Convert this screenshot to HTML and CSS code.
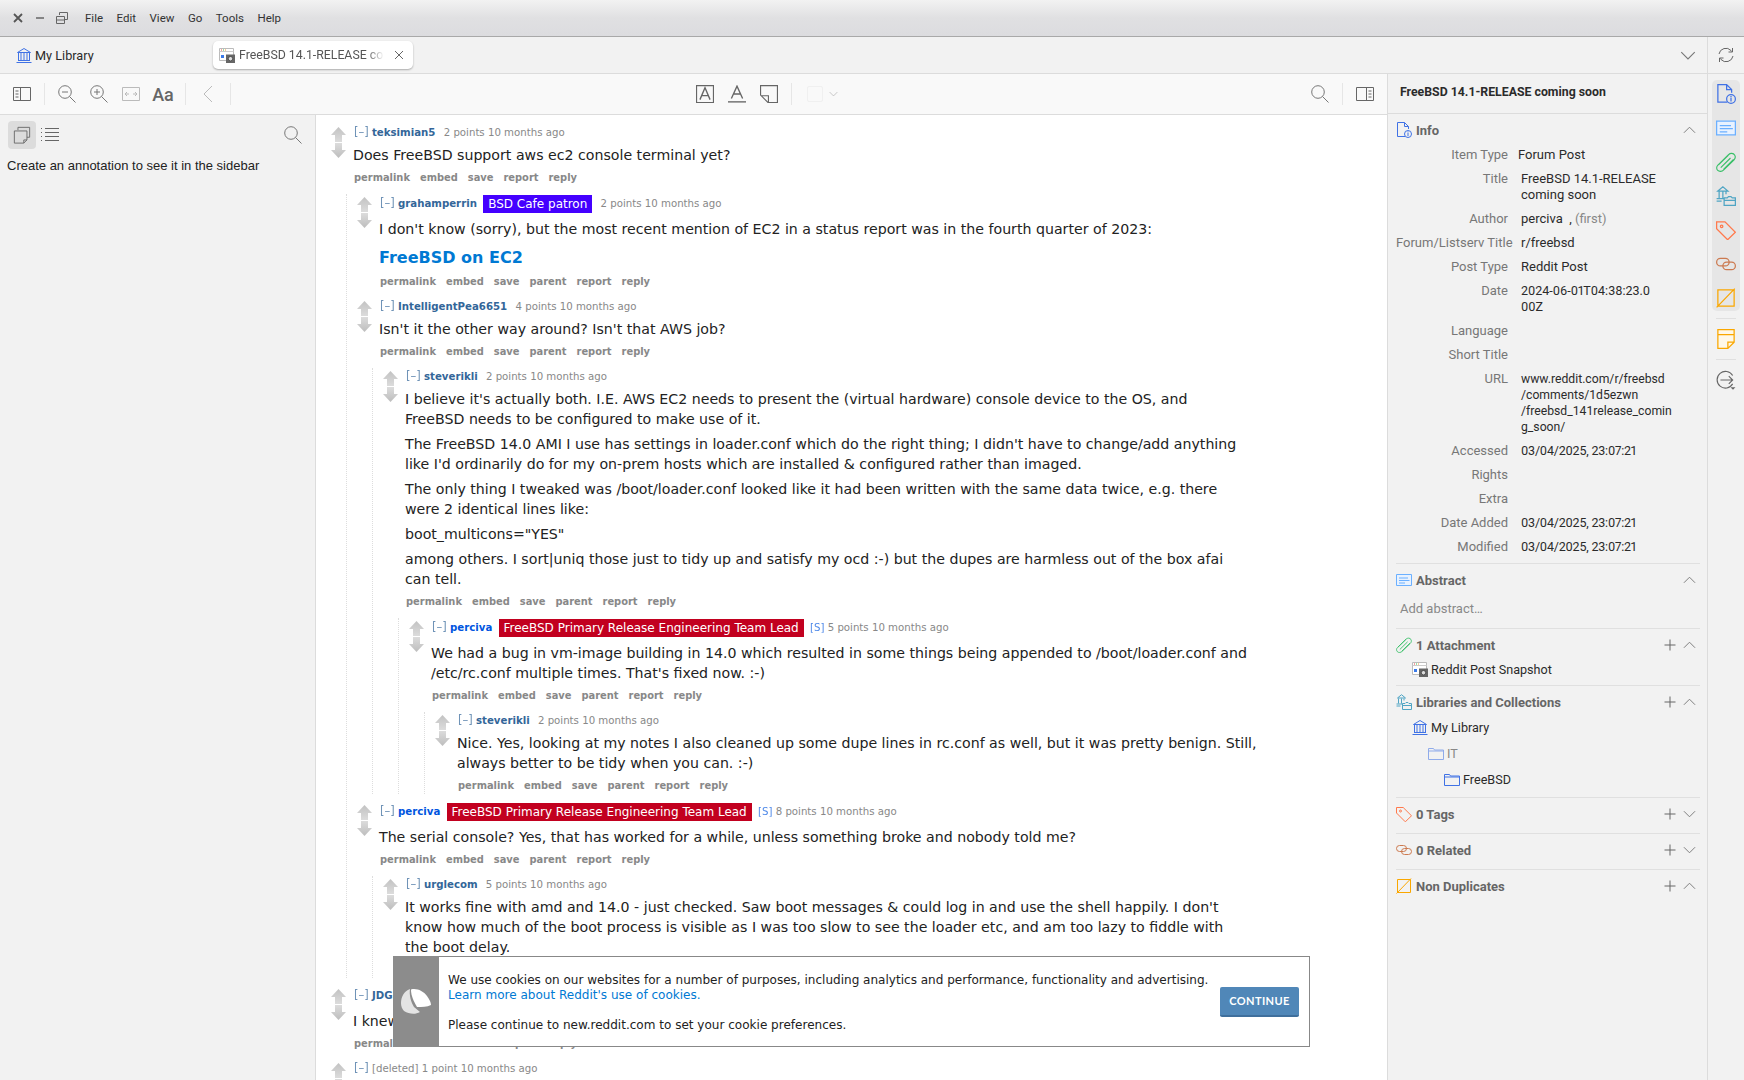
FILE: index.html
```html
<!DOCTYPE html>
<html lang="en">
<head>
<meta charset="utf-8">
<title>FreeBSD 14.1-RELEASE coming soon</title>
<link rel="stylesheet" href="styles.css">
</head>
<body>
<svg class="defs" aria-hidden="true">
  <defs>
    <linearGradient id="up" x1="0" y1="0" x2="0" y2="1"><stop offset="0" stop-color="#c2c2c2"/><stop offset="1" stop-color="#dcdcdc"/></linearGradient>
    <linearGradient id="down" x1="0" y1="0" x2="0" y2="1"><stop offset="0" stop-color="#dcdcdc"/><stop offset="1" stop-color="#bdbdbd"/></linearGradient>
  </defs>
  <symbol id="i-up" viewBox="0 0 15 15"><path d="M7.5 0 15 8H11V15H4V8H0Z" fill="url(#up)"/></symbol>
  <symbol id="i-down" viewBox="0 0 15 15"><path d="M4 0H11V7H15L7.5 15 0 7H4Z" fill="url(#down)"/></symbol>
  <symbol id="i-snap" viewBox="0 0 16 16"><path d="M.5 1.5h14v12H.5z" fill="#fff" stroke="#bbb"/><path d="M.5 4.5h14" stroke="#ccc"/><path d="M2 3h1" stroke="#e44"/><path d="M4 3h1" stroke="#4b4"/><path d="M6 3h1" stroke="#e93"/><path d="M2 8h3v3H2z" fill="#3b7bea"/><path d="M7 7.500h9v8.500H7z" fill="#666"/><circle cx="11.500" cy="11.700" r="2.200" fill="#ddd" stroke="#333" stroke-width=".7"/></symbol>
  <symbol id="i-lib" viewBox="0 0 16 16"><path d="M1.500 5.500 8 1.500l6.500 4z M2.500 6v7 M5 6v7 M8 6v7 M11 6v7 M13.500 6v7 M2 13.500h12 M.5 15.500h15" fill="none" stroke="#4072e5"/></symbol>
  <symbol id="i-info" viewBox="0 0 16 16"><path d="M9 14.500H1.500V.5H8.500l4 4V7 M8.500.5v4h4" fill="none" stroke="#4072e5"/><circle cx="12" cy="12" r="3.500" fill="none" stroke="#4072e5"/><path d="M12 11v3 M12 9.500v1" stroke="#4072e5"/></symbol>
  <symbol id="i-abs" viewBox="0 0 16 16"><path d="M.5 2.500h15v11H.5z" fill="#e8f2ff" stroke="#6bb0ff"/><path d="M3 6h9 M3 8.500h10.500 M3 11h6" stroke="#6bb0ff"/></symbol>
  <symbol id="i-clip" viewBox="0 0 16 16"><path d="M1.500 10.500 10 2.200c1.600-1.600 4-1.300 4.900.2.800 1.300.5 2.900-.6 4L6.200 14.300c-1.500 1.500-3.700 1.500-4.800.4-1.200-1.200-1.100-3 .1-4.200M3.800 12.500 11.600 4.800M6 14l8-8M2 10.200 9.800 2.600" fill="none" stroke="#39bf68" stroke-width=".9"/></symbol>
  <symbol id="i-libcol" viewBox="0 0 16 16"><path d="M1.500 4 5.500.7 9.500 4z M2.500 4.500v5 M5.500 4.500v5 M8 4.500v2 M.5 10h6 M.5 12h4" fill="none" stroke="#50a5c4"/><path d="M6.500 15.500V9.500h2.500l1-1h2l1 1h2.500v6zM6.500 11.500h9" fill="none" stroke="#50a5c4"/></symbol>
  <symbol id="i-tag" viewBox="0 0 16 16"><path d="M.5 1.500h6.700l8.300 8.300-6.200 6-8.800-8.800z" fill="none" stroke="#ff794c"/><circle cx="4.500" cy="5" r="1" fill="none" stroke="#ff794c"/></symbol>
  <symbol id="i-rel" viewBox="0 0 16 16"><rect x=".5" y="3.500" width="10" height="6" rx="3" fill="none" stroke="#cc7a50"/><rect x="5.500" y="6.500" width="10" height="6" rx="3" fill="none" stroke="#cc7a50"/></symbol>
  <symbol id="i-dup" viewBox="0 0 16 16"><path d="M1.500 1.500h13v13h-13z M.5 15.500 15 .5" fill="none" stroke="#faa700"/></symbol>
  <symbol id="i-note" viewBox="0 0 16 16"><path d="M1.500.5h13v10l-5 5h-8z M1.500 4.500h13 M9.500 15.500v-5h5" fill="#fff8e8" stroke="#faa700"/></symbol>
  <symbol id="i-loc" viewBox="0 0 18 18"><path d="M15 12.500A7.500 7.500 0 1 1 15 5 M4 9h11 M11.500 5.500 15 9l-3.500 3.500" fill="none" stroke="#666"/><path d="M13 15.500h4.500l-2.200 2.200z" fill="#666"/></symbol>
  <symbol id="i-folder" viewBox="0 0 16 16"><path d="M.5 14.500V3.500h5l1 1.500h9v9.500zM.5 6h15" fill="none" stroke="currentColor"/></symbol>
  <symbol id="i-ann" viewBox="0 0 20 20"><path d="M5.500 4.500V1.500h13v11h-3 M1.500 5.500h14v10l-3.500 3.500H1.500z M12 19v-3.500h3.500" fill="none" stroke="#666"/></symbol>
  <symbol id="i-search" viewBox="0 0 18 18"><circle cx="7" cy="7" r="6.300" fill="none" stroke="#777"/><path d="m11.500 11.500 6 6" stroke="#777"/></symbol>
  <symbol id="i-up-ch" viewBox="0 0 14 8"><path d="M1 7 7 1l6 6" fill="none" stroke="#777"/></symbol>
  <symbol id="i-dn-ch" viewBox="0 0 14 8"><path d="M1 1l6 6 6-6" fill="none" stroke="#777"/></symbol>
  <symbol id="i-plus" viewBox="0 0 12 12"><path d="M6 .5v11 M.5 6h11" stroke="#666"/></symbol>
</svg>

<header class="titlebar">
  <div class="winctl">
    <svg class="ic12" viewBox="0 0 12 12"><path d="M2 2l8 8M10 2l-8 8" stroke="#555" stroke-width="1.800"/></svg>
    <svg class="ic12" viewBox="0 0 12 12"><path d="M2 6h8" stroke="#666" stroke-width="1.500"/></svg>
    <svg class="ic12" viewBox="0 0 12 12"><path d="M3.500 3V.5h8v7h-3M.5 4.500h8v7h-8z M.5 8h8" fill="none" stroke="#666"/></svg>
  </div>
  <nav class="menu"><span>File</span><span>Edit</span><span>View</span><span>Go</span><span>Tools</span><span>Help</span></nav>
</header>

<div class="tabbar">
  <div class="libtab"><svg class="ic16"><use href="#i-lib"/></svg><span>My Library</span></div>
  <div class="tab">
    <svg class="ic16"><use href="#i-snap"/></svg>
    <span class="tab-text">FreeBSD 14.1-RELEASE coming soon</span>
    <svg class="tab-x" viewBox="0 0 10 10"><path d="M1 1l8 8M9 1l-8 8" stroke="#666"/></svg>
  </div>
  <div class="tabbar-right">
    <svg class="tab-ch"><use href="#i-dn-ch"/></svg>
    <div class="sync">
      <svg class="ic16" viewBox="0 0 16 16"><path d="M1 7a7 7 0 0 1 12-3.500l1.500 1.500 M14.500 1v4h-4 M15 9a7 7 0 0 1-12 3.500L1.500 11 M1.500 15v-4h4" fill="none" stroke="#666"/></svg>
    </div>
  </div>
</div>

<main class="workspace">
  <section class="reader">
    <div class="toolbar">
      <div class="btn"><svg class="ic18" viewBox="0 0 18 14"><path d="M.5.500h17v13H.5z M7.500.500v13 M2.500 4h3 M2.500 7h3 M2.500 10h3" fill="none" stroke="#666"/></svg></div>
      <i class="tsep"></i>
      <div class="btn"><svg class="ic18" viewBox="0 0 18 18"><circle cx="7" cy="7" r="6.300" fill="none" stroke="#777"/><path d="m11.500 11.500 6 6M4 7h6" stroke="#777"/></svg></div>
      <div class="btn"><svg class="ic18" viewBox="0 0 18 18"><circle cx="7" cy="7" r="6.300" fill="none" stroke="#777"/><path d="m11.500 11.500 6 6M4 7h6M7 4v6" stroke="#777"/></svg></div>
      <div class="btn"><svg class="ic18" viewBox="0 0 18 14"><path d="M.5.500h17v13H.5z" fill="none" stroke="#bbb"/><path d="M3 7h4M11 7h4M5 5 3 7l2 2M13 5l2 2-2 2" fill="none" stroke="#bbb"/></svg></div>
      <div class="btn aa">Aa</div>
      <i class="tsep"></i>
      <div class="btn"><svg class="ic18" viewBox="0 0 18 18"><path d="M13 1 5 9l8 8" fill="none" stroke="#bbb"/></svg></div>
      <i class="tsep"></i>
      <div class="tools-mid">
        <div class="btn"><svg class="ic18" viewBox="0 0 16 16"><path d="M.5.500h15v15H.5z" fill="none" stroke="#666"/><path d="M3.500 13 8 2.500 12.500 13M5 9.500h6" fill="none" stroke="#666" stroke-width="1.200"/></svg></div>
        <div class="btn"><svg class="ic18" viewBox="0 0 16 16"><path d="M3 12 8 1l5 11M4.800 8h6.400" fill="none" stroke="#666" stroke-width="1.200"/><path d="M0 15h16" stroke="#666" stroke-width="1.200"/></svg></div>
        <div class="btn"><svg class="ic18" viewBox="0 0 16 16"><path d="M.5.500h15v15H7L.5 9z M7.500 15.500v-6h-6.500" fill="none" stroke="#666"/></svg></div>
        <i class="tsep"></i>
        <div class="swatch"></div>
        <svg class="sw-ch"><use href="#i-dn-ch"/></svg>
      </div>
      <div class="tools-right">
        <div class="btn"><svg class="ic18"><use href="#i-search"/></svg></div>
        <i class="tsep"></i>
        <div class="btn"><svg class="ic18" viewBox="0 0 18 14"><path d="M.5.500h17v13H.5z M10.500.500v13 M12.500 4h3 M12.500 7h3 M12.500 10h3" fill="none" stroke="#666"/></svg></div>
      </div>
    </div>

    <div class="reader-body">
      <aside class="annot">
        <div class="annot-tools">
          <div class="annot-on"><svg class="ic18"><use href="#i-ann"/></svg></div>
          <svg class="ic18 annot-list" viewBox="0 0 18 16"><path d="M0 1.500h1M4 1.500h14M0 5.500h1M4 5.500h14M0 9.500h1M4 9.500h14M0 13.500h1M4 13.500h14" stroke="#666"/></svg>
          <svg class="ic18 annot-find"><use href="#i-search"/></svg>
        </div>
        <p class="annot-msg">Create an annotation to see it in the sidebar</p>
      </aside>

      <article class="page">
        <div class="comment">
          <div class="midcol"><svg class="arr"><use href="#i-up"/></svg><svg class="arr"><use href="#i-down"/></svg></div>
          <div class="entry">
            <p class="tagline"><span class="tog">[–]</span> <b class="au">teksimian5</b> <span class="meta">2 points 10 months ago</span></p>
            <div class="md"><p>Does FreeBSD support aws ec2 console terminal yet?</p></div>
            <ul class="btns"><li>permalink</li><li>embed</li><li>save</li><li>report</li><li>reply</li></ul>
            <div class="child">
              <div class="comment">
                <div class="midcol"><svg class="arr"><use href="#i-up"/></svg><svg class="arr"><use href="#i-down"/></svg></div>
                <div class="entry">
                  <p class="tagline flaired"><span class="tog">[–]</span> <b class="au">grahamperrin</b> <span class="flair purple">BSD Cafe patron</span> <span class="meta">2 points 10 months ago</span></p>
                  <div class="md"><p>I don't know (sorry), but the most recent mention of EC2 in a status report was in the fourth quarter of 2023:</p><h1>FreeBSD on EC2</h1></div>
                  <ul class="btns"><li>permalink</li><li>embed</li><li>save</li><li>parent</li><li>report</li><li>reply</li></ul>
                </div>
              </div>
              <div class="comment">
                <div class="midcol"><svg class="arr"><use href="#i-up"/></svg><svg class="arr"><use href="#i-down"/></svg></div>
                <div class="entry">
                  <p class="tagline"><span class="tog">[–]</span> <b class="au">IntelligentPea6651</b> <span class="meta">4 points 10 months ago</span></p>
                  <div class="md"><p>Isn't it the other way around? Isn't that AWS job?</p></div>
                  <ul class="btns"><li>permalink</li><li>embed</li><li>save</li><li>parent</li><li>report</li><li>reply</li></ul>
                  <div class="child">
                    <div class="comment">
                      <div class="midcol"><svg class="arr"><use href="#i-up"/></svg><svg class="arr"><use href="#i-down"/></svg></div>
                      <div class="entry">
                        <p class="tagline"><span class="tog">[–]</span> <b class="au">steverikli</b> <span class="meta">2 points 10 months ago</span></p>
                        <div class="md">
                          <p>I believe it's actually both. I.E. AWS EC2 needs to present the (virtual hardware) console device to the OS, and FreeBSD needs to be configured to make use of it.</p>
                          <p>The FreeBSD 14.0 AMI I use has settings in loader.conf which do the right thing; I didn't have to change/add anything like I'd ordinarily do for my on-prem hosts which are installed &amp; configured rather than imaged.</p>
                          <p>The only thing I tweaked was /boot/loader.conf looked like it had been written with the same data twice, e.g. there were 2 identical lines like:</p>
                          <p>boot_multicons="YES"</p>
                          <p>among others. I sort|uniq those just to tidy up and satisfy my ocd :-) but the dupes are harmless out of the box afai can tell.</p>
                        </div>
                        <ul class="btns"><li>permalink</li><li>embed</li><li>save</li><li>parent</li><li>report</li><li>reply</li></ul>
                        <div class="child">
                          <div class="comment">
                            <div class="midcol"><svg class="arr"><use href="#i-up"/></svg><svg class="arr"><use href="#i-down"/></svg></div>
                            <div class="entry">
                              <p class="tagline flaired"><span class="tog">[–]</span> <b class="au sub">perciva</b> <span class="flair red">FreeBSD Primary Release Engineering Team Lead</span> <span class="subm">[S]</span> <span class="meta">5 points 10 months ago</span></p>
                              <div class="md"><p>We had a bug in vm-image building in 14.0 which resulted in some things being appended to /boot/loader.conf and /etc/rc.conf multiple times. That's fixed now. :-)</p></div>
                              <ul class="btns"><li>permalink</li><li>embed</li><li>save</li><li>parent</li><li>report</li><li>reply</li></ul>
                              <div class="child">
                                <div class="comment">
                                  <div class="midcol"><svg class="arr"><use href="#i-up"/></svg><svg class="arr"><use href="#i-down"/></svg></div>
                                  <div class="entry">
                                    <p class="tagline"><span class="tog">[–]</span> <b class="au">steverikli</b> <span class="meta">2 points 10 months ago</span></p>
                                    <div class="md"><p>Nice. Yes, looking at my notes I also cleaned up some dupe lines in rc.conf as well, but it was pretty benign. Still, always better to be tidy when you can. :-)</p></div>
                                    <ul class="btns"><li>permalink</li><li>embed</li><li>save</li><li>parent</li><li>report</li><li>reply</li></ul>
                                  </div>
                                </div>
                              </div>
                            </div>
                          </div>
                        </div>
                      </div>
                    </div>
                  </div>
                </div>
              </div>
              <div class="comment">
                <div class="midcol"><svg class="arr"><use href="#i-up"/></svg><svg class="arr"><use href="#i-down"/></svg></div>
                <div class="entry">
                  <p class="tagline flaired"><span class="tog">[–]</span> <b class="au sub">perciva</b> <span class="flair red">FreeBSD Primary Release Engineering Team Lead</span> <span class="subm">[S]</span> <span class="meta">8 points 10 months ago</span></p>
                  <div class="md"><p>The serial console? Yes, that has worked for a while, unless something broke and nobody told me?</p></div>
                  <ul class="btns"><li>permalink</li><li>embed</li><li>save</li><li>parent</li><li>report</li><li>reply</li></ul>
                  <div class="child">
                    <div class="comment">
                      <div class="midcol"><svg class="arr"><use href="#i-up"/></svg><svg class="arr"><use href="#i-down"/></svg></div>
                      <div class="entry">
                        <p class="tagline"><span class="tog">[–]</span> <b class="au">urglecom</b> <span class="meta">5 points 10 months ago</span></p>
                        <div class="md"><p>It works fine with amd and 14.0 - just checked. Saw boot messages &amp; could log in and use the shell happily. I don't know how much of the boot process is visible as I was too slow to see the loader etc, and am too lazy to fiddle with the boot delay.</p></div>
                        <ul class="btns"><li>permalink</li><li>embed</li><li>save</li><li>parent</li><li>report</li><li>reply</li></ul>
                      </div>
                    </div>
                  </div>
                </div>
              </div>
            </div>
          </div>
        </div>
        <div class="comment">
          <div class="midcol"><svg class="arr"><use href="#i-up"/></svg><svg class="arr"><use href="#i-down"/></svg></div>
          <div class="entry">
            <p class="tagline flaired"><span class="tog">[–]</span> <b class="au">JDG</b></p>
            <div class="md"><p>I knew</p></div>
            <ul class="btns"><li>permalink</li><li>embed</li><li>save</li><li>report</li><li>reply</li></ul>
          </div>
        </div>
        <div class="comment">
          <div class="midcol"><svg class="arr"><use href="#i-up"/></svg><svg class="arr"><use href="#i-down"/></svg></div>
          <div class="entry">
            <p class="tagline"><span class="tog">[–]</span> <span class="meta">[deleted] 1 point 10 months ago</span></p>
          </div>
        </div>

        <div class="cookie">
          <div class="cookie-pic">
            <svg viewBox="0 0 30 26" width="30" height="26"><path d="M9 0C3 2 0 8 0 14c0 3 1 6 3 8 5 3 11 4 16 1l-6-5C10 13 8 6 9 0z" fill="#e4e4e4"/><path d="M10 .5C16-1 22 2 26 7c2 3 4 6 4 9-4 2-9 2-14 2C13 13 10 7 10 .5z" fill="#fff"/></svg>
          </div>
          <div class="cookie-text">
            <p>We use cookies on our websites for a number of purposes, including analytics and performance, functionality and advertising.<br><a href="#">Learn more about Reddit's use of cookies.</a></p>
            <p>Please continue to new.reddit.com to set your cookie preferences.</p>
          </div>
          <div class="cookie-btn">CONTINUE</div>
        </div>
      </article>
    </div>
  </section>

  <aside class="pane">
    <h2 class="pane-title">FreeBSD 14.1-RELEASE coming soon</h2>

    <section class="sec sec-info">
      <div class="sec-head"><svg class="ic16"><use href="#i-info"/></svg><span>Info</span><svg class="chev"><use href="#i-up-ch"/></svg></div>
      <dl class="fields">
        <dt>Item Type</dt><dd class="plain">Forum Post</dd>
        <dt>Title</dt><dd>FreeBSD 14.1-RELEASE<br>coming soon</dd>
        <dt>Author</dt><dd>perciva &nbsp;, <span class="dim">(first)</span></dd>
        <dt>Forum/Listserv Title</dt><dd>r/freebsd</dd>
        <dt>Post Type</dt><dd>Reddit Post</dd>
        <dt>Date</dt><dd class="num">2024-06-01T04:38:23.0<br>00Z</dd>
        <dt>Language</dt><dd></dd>
        <dt>Short Title</dt><dd></dd>
        <dt>URL</dt><dd class="url">www.reddit.com/r/freebsd<br>/comments/1d5ezwn<br>/freebsd_141release_comin<br>g_soon/</dd>
        <dt>Accessed</dt><dd class="num ts">03/04/2025, 23:07:21</dd>
        <dt>Rights</dt><dd></dd>
        <dt>Extra</dt><dd></dd>
        <dt>Date Added</dt><dd class="num ts">03/04/2025, 23:07:21</dd>
        <dt>Modified</dt><dd class="num ts">03/04/2025, 23:07:21</dd>
      </dl>
    </section>

    <section class="sec sec-abs">
      <div class="sec-head"><svg class="ic16"><use href="#i-abs"/></svg><span>Abstract</span><svg class="chev"><use href="#i-up-ch"/></svg></div>
      <p class="add-abs">Add abstract…</p>
    </section>

    <section class="sec sec-att">
      <div class="sec-head"><svg class="ic16"><use href="#i-clip"/></svg><span>1 Attachment</span><svg class="plus"><use href="#i-plus"/></svg><svg class="chev"><use href="#i-up-ch"/></svg></div>
      <div class="tree-row lv1 att"><svg class="ic16"><use href="#i-snap"/></svg><span>Reddit Post Snapshot</span></div>
    </section>

    <section class="sec sec-libs">
      <div class="sec-head"><svg class="ic16"><use href="#i-libcol"/></svg><span>Libraries and Collections</span><svg class="plus"><use href="#i-plus"/></svg><svg class="chev"><use href="#i-up-ch"/></svg></div>
      <div class="tree-row lv1"><svg class="ic16"><use href="#i-lib"/></svg><span>My Library</span></div>
      <div class="tree-row lv2 faded"><svg class="ic16"><use href="#i-folder"/></svg><span>IT</span></div>
      <div class="tree-row lv3"><svg class="ic16"><use href="#i-folder"/></svg><span>FreeBSD</span></div>
    </section>

    <section class="sec">
      <div class="sec-head"><svg class="ic16"><use href="#i-tag"/></svg><span>0 Tags</span><svg class="plus"><use href="#i-plus"/></svg><svg class="chev"><use href="#i-dn-ch"/></svg></div>
    </section>
    <section class="sec">
      <div class="sec-head"><svg class="ic16"><use href="#i-rel"/></svg><span>0 Related</span><svg class="plus"><use href="#i-plus"/></svg><svg class="chev"><use href="#i-dn-ch"/></svg></div>
    </section>
    <section class="sec sec-last">
      <div class="sec-head"><svg class="ic16"><use href="#i-dup"/></svg><span>Non Duplicates</span><svg class="plus"><use href="#i-plus"/></svg><svg class="chev"><use href="#i-up-ch"/></svg></div>
    </section>
  </aside>

  <aside class="strip">
    <div class="strip-pill">
      <svg class="ic20"><use href="#i-info"/></svg>
      <svg class="ic20"><use href="#i-abs"/></svg>
      <svg class="ic20"><use href="#i-clip"/></svg>
      <svg class="ic20"><use href="#i-libcol"/></svg>
      <svg class="ic20"><use href="#i-tag"/></svg>
      <svg class="ic20"><use href="#i-rel"/></svg>
      <svg class="ic20"><use href="#i-dup"/></svg>
    </div>
    <i class="strip-sep"></i>
    <svg class="ic20"><use href="#i-note"/></svg>
    <i class="strip-sep"></i>
    <svg class="ic20"><use href="#i-loc"/></svg>
  </aside>
</main>
</body>
</html>
```

FILE: styles.css
```css
* { box-sizing: border-box; }
html, body { margin: 0; height: 100%; }
body {
  width: 1744px; height: 1080px; overflow: hidden;
  display: flex; flex-direction: column;
  font-family: Roboto, "Liberation Sans", sans-serif;
  font-size: 13px; color: #2b2b2b; background: #f2f2f2;
}
.defs { position: absolute; width: 0; height: 0; }
.ic12 { width: 12px; height: 12px; flex: none; }
.ic16 { width: 16px; height: 16px; flex: none; }
.ic18 { width: 18px; height: 18px; flex: none; }
.ic20 { width: 20px; height: 20px; flex: none; }

/* title bar */
.titlebar {
  height: 37px; flex: none; display: flex; align-items: center;
  background: linear-gradient(#f2f2f2, #e0e0e2 50%, #dcdcdf);
  border-bottom: 1px solid #a9a9a9;
}
.winctl { display: flex; gap: 10px; padding-left: 12px; width: 85px; }
.menu { display: flex; gap: 13.500px; font-size: 11.500px; color: #333; }

/* tab bar */
.tabbar {
  height: 37px; flex: none; display: flex; align-items: center;
  background: #f2f2f2; border-bottom: 1px solid #dcdcdc;
}
.libtab { display: flex; align-items: center; gap: 3px; width: 213px; padding-left: 16px; font-size: 12.700px; }
.tab {
  width: 200px; height: 28px; display: flex; align-items: center; gap: 4px; padding: 0 9px 0 6px;
  background: #fff; border-radius: 5px; box-shadow: 0 1px 2px rgba(0,0,0,.3);
}
.tab-text {
  flex: 1; min-width: 0; overflow: hidden; white-space: nowrap; color: #555; font-size: 12.300px;
  -webkit-mask-image: linear-gradient(90deg, #000 88%, transparent);
  mask-image: linear-gradient(90deg, #000 88%, transparent);
}
.tab-x { width: 10px; height: 10px; flex: none; margin-left: 6px; }
.tabbar-right { margin-left: auto; display: flex; align-items: center; height: 100%; }
.tab-ch { width: 16px; height: 9px; margin-right: 11px; }
.sync { width: 37px; height: 100%; border-left: 1px solid #dcdcdc; display: flex; align-items: center; justify-content: center; }

/* layout */
.workspace { flex: 1; min-height: 0; display: flex; }
.reader { width: 1387px; flex: none; display: flex; flex-direction: column; min-height: 0; }

/* toolbar */
.toolbar {
  height: 41px; flex: none; display: flex; align-items: center; padding-left: 6px;
  background: #f9f9f9; border-bottom: 1px solid #dcdcdc;
}
.btn { width: 32px; height: 28px; display: flex; align-items: center; justify-content: center; }
.aa { font-size: 18px; font-weight: 500; color: #666; }
.tsep { width: 1px; height: 22px; background: #e6e6e6; margin: 0 6px; flex: none; }
.tools-mid { display: flex; align-items: center; margin-left: 452px; }
.swatch { width: 16px; height: 16px; margin-left: 9px; border: 1px solid #f0f0f0; border-radius: 2px; }
.sw-ch { width: 9px; height: 6px; margin-left: 6px; opacity: .6; }
.tools-right { display: flex; align-items: center; margin-left: auto; padding-right: 6px; }

.reader-body { flex: 1; min-height: 0; display: flex; }
.annot { width: 316px; flex: none; background: #f2f2f2; border-right: 1px solid #dcdcdc; padding: 6px 8px; }
.annot-tools { display: flex; align-items: center; height: 28px; }
.annot-on { width: 28px; height: 28px; background: #dcdcdc; border-radius: 4px; display: flex; align-items: center; justify-content: center; }
.annot-list { margin-left: 5px; }
.annot-find { margin-left: auto; margin-right: 5px; }
.annot-msg { margin: 9px 0 0 -1px; font: 13px "Liberation Sans", Arial, sans-serif; color: #222; }

/* reddit page */
.page {
  position: relative; flex: 1; min-width: 0; overflow: hidden; background: #fff;
  padding: 9px 0 0 5px;
  font-family: "DejaVu Sans", Verdana, sans-serif; font-size: 10px; color: #222;
}
.comment { display: flex; }
.midcol { width: 32px; flex: none; display: flex; flex-direction: column; align-items: center; padding: 3px 0 0 3px; gap: 1px; }
.arr { width: 15px; height: 15px; flex: none; display: block; }
.entry { flex: 1; min-width: 0; }
.tagline { margin: 0 0 0 1px; height: 16px; line-height: 16px; font-size: 10.200px; color: #888; white-space: nowrap; }
.tagline.flaired { height: 20px; line-height: 18px; }
.tog { color: #369; opacity: .7; font-size: 11.500px; }
.au { color: #369; margin-right: 5px; }
.au.sub { color: #0055df; }
.subm { color: #0055df; opacity: .7; }
.meta { color: #888; }
.flair { display: inline-block; color: #fff; padding: 0 5px; font-size: 12px; line-height: 18px; margin: 1px 5px 0 -2px; vertical-align: top; }
.purple { background: #4400ff; }
.red { background: #c2001f; margin-right: 3px; }
.md { max-width: 838px; font-size: 14.170px; line-height: 20px; }
.md p { margin: 5px 0; }
.md h1 { margin: 9px 0 6px; font-size: 16px; line-height: 20px; font-weight: 700; color: #0079d3; }
.btns { list-style: none; margin: 0 0 0 1px; padding: 0; height: 16px; display: flex; gap: 10px; font-size: 9.900px; line-height: 16px; font-weight: 700; color: #888; }
.child { margin: 8px 0 0 -7px; border-left: 1px dotted #ddd; }
.child > .comment + .comment { margin-top: 8px; }
.page > .comment + .comment { margin-top: 8px; }

/* cookie banner */
.cookie {
  position: absolute; left: 77px; top: 841px; width: 917px; height: 91px;
  display: flex; background: #fff; border: 1px solid #888;
}
.cookie-pic { width: 46px; margin: -1px 0 -1px -1px; flex: none; background: #8c8c8c; display: flex; align-items: center; justify-content: center; }
.cookie-text { flex: 1; padding: 16px 0 0 9px; font-size: 12.040px; line-height: 15px; color: #222; }
.cookie-text p { margin: 0 0 15px; }
.cookie-text a { color: #0079d3; text-decoration: none; }
.cookie-btn {
  position: absolute; right: 10px; top: 30px; width: 79px; height: 30px;
  background: #5087b8; border-bottom: 2px solid #3f6f9c; border-radius: 2px;
  color: #fff; font: 700 11px/28px Lato, sans-serif; text-align: center; letter-spacing: .4px;
}

/* right pane */
.pane { width: 320px; flex: none; border-left: 1px solid #dcdcdc; display: flex; flex-direction: column; background: #f2f2f2; }
.pane-title { margin: 0; height: 40px; flex: none; padding: 0 12px; font-size: 12.300px; line-height: 36px; font-weight: 700; color: #2b2b2b; border-bottom: 1px solid #dcdcdc; }
.sec { margin: 0 7px 0 8px; padding: 4px 0 7px; border-bottom: 1px solid #e0e0e0; }
.sec-last { border-bottom: 0; }
.sec-info { padding-bottom: 4px; }
.sec-abs { padding-bottom: 11px; }
.sec-att { padding-bottom: 4px; }
.sec-libs { padding-bottom: 5px; }
.sec-head { height: 24px; display: flex; align-items: center; gap: 4px; font-weight: 700; color: #666; font-size: 13px; }
.sec-head .plus { width: 12px; height: 12px; margin-left: auto; margin-right: 3px; }
.sec-head span + .chev { margin-left: auto; }
.chev { width: 13px; height: 8px; margin-right: 4px; flex: none; }
.fields { display: grid; grid-template-columns: 112px 1fr; column-gap: 10px; margin: 1px 0 0; }
.fields dt { text-align: right; color: #777; padding: 4px 0; line-height: 16px; white-space: nowrap; }
.fields dd { margin: 0; padding: 4px 0 4px 3px; line-height: 16px; min-height: 24px; color: #2b2b2b; white-space: nowrap; }
.fields dd.plain { padding-left: 0; }
.fields dd.num { font-size: 12.500px; font-variant-numeric: proportional-nums; }
.fields dd.ts { letter-spacing: -.2px; }
.fields dd.url { font-size: 12.200px; }
.dim { color: #888; }
.add-abs { margin: 9px 0 0 4px; line-height: 16px; color: #888; }
.tree-row { height: 26px; display: flex; align-items: center; gap: 3px; font-size: 12.600px; }
.tree-row.att { height: 24px; }
.lv1 { padding-left: 16px; }
.lv2 { padding-left: 32px; color: #4072e5; }
.lv2 span { color: #888; }
.lv2.faded svg { opacity: .55; }
.lv3 { padding-left: 48px; color: #4072e5; }
.lv3 span { color: #2b2b2b; }

/* right strip */
.strip { width: 37px; flex: none; border-left: 1px solid #dcdcdc; display: flex; flex-direction: column; align-items: center; padding-top: 6px; background: #f2f2f2; }
.strip-pill { width: 28px; height: 231px; background: #e6e6e6; border-radius: 5px; display: flex; flex-direction: column; align-items: center; justify-content: space-between; padding: 4px 0 3px; }
.strip-sep { width: 20px; height: 1px; background: #e0e0e0; margin: 7px 0; }
.strip > .ic20 { margin: 3px 0; }
```
